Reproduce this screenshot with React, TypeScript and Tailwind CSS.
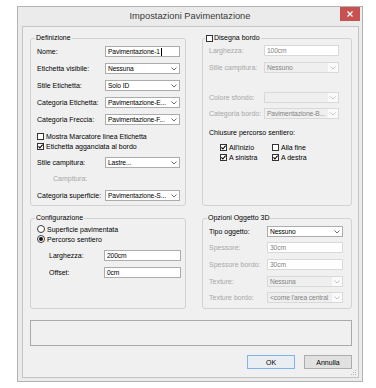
import React from "react";

const Chevron = ({ disabled }: { disabled?: boolean }) => (
  <svg width="6" height="4" viewBox="0 0 6 4" className="shrink-0">
    <path d="M0.5 0.5 L3 3 L5.5 0.5" fill="none" stroke={disabled ? "#c4c4c4" : "#6f6f6f"} strokeWidth="1" />
  </svg>
);

const Check = ({ checked }: { checked?: boolean }) => (
  <span className="flex h-[7px] w-[7px] shrink-0 items-center justify-center border border-[#333333] bg-white">
    {checked && (
      <svg width="5" height="5" viewBox="0 0 5 5">
        <path d="M0.4 2.4 L1.9 4 L4.6 0.6" fill="none" stroke="#000" strokeWidth="1.1" />
      </svg>
    )}
  </span>
);

const Radio = ({ checked }: { checked?: boolean }) => (
  <span className="flex h-[8px] w-[8px] shrink-0 items-center justify-center rounded-full border border-[#3a3a3a] bg-white">
    {checked && <span className="h-[4px] w-[4px] rounded-full bg-[#111111]" />}
  </span>
);

function Select({ value, disabled, className }: { value: string; disabled?: boolean; className: string }) {
  return (
    <div
      className={`flex h-[11px] shrink-0 items-center border ${
        disabled ? "border-[#d9d9d9] bg-[#efefef] text-[#838383]" : "border-[#acacac] bg-white text-black"
      } ${className}`}
    >
      <span className="min-w-0 flex-1 overflow-hidden whitespace-nowrap pl-[2px] text-[6.7px] leading-[9px] tracking-[-0.1px]">
        {value}
      </span>
      <span className={`flex h-full w-[10px] shrink-0 items-center justify-center ${disabled ? "bg-[#fafafa]" : ""}`}>
        <Chevron disabled={disabled} />
      </span>
    </div>
  );
}

function Input({ value, disabled, cursor, className }: { value: string; disabled?: boolean; cursor?: boolean; className: string }) {
  return (
    <div
      className={`flex h-[11px] shrink-0 items-center border bg-white pl-[2px] text-[6.7px] leading-[9px] tracking-[-0.1px] ${
        disabled ? "border-[#d9d9d9] text-[#838383]" : "border-[#acacac] text-black"
      } ${className}`}
    >
      <span className="whitespace-nowrap">{value}</span>
      {cursor && <span className="ml-[1px] h-[8px] w-[1px] bg-black" />}
    </div>
  );
}

function Row({
  label,
  labelW,
  disabledLabel,
  className,
  children,
}: {
  label: string;
  labelW: string;
  disabledLabel?: boolean;
  className: string;
  children: React.ReactNode;
}) {
  return (
    <div className={`flex h-[11px] items-center ${className}`}>
      <span className={`${labelW} shrink-0 whitespace-nowrap leading-[9px] ${disabledLabel ? "text-[#a7a7a7]" : "text-black"}`}>
        {label}
      </span>
      {children}
    </div>
  );
}

export default function App() {
  return (
    <div className="h-[388px] w-[376px] bg-white pl-[17px] pt-[6px] font-['Liberation_Sans',Arial,sans-serif] text-[7px] text-black">
      <div className="flex h-[376px] w-[346px] flex-col border border-[#b3b3b3] bg-[#ebebeb]">
        {/* title bar */}
        <div className="relative flex h-[19px] shrink-0 items-center justify-center">
          <span className="text-[9.3px] leading-[11px] text-[#3a3a3a]">Impostazioni Pavimentazione</span>
          <div className="absolute right-[2px] top-0 flex h-[14px] w-[20px] items-center justify-center bg-[#c75050]">
            <svg width="6" height="6" viewBox="0 0 6 6">
              <path d="M0.5 0.5 L5.5 5.5 M5.5 0.5 L0.5 5.5" stroke="#ffffff" strokeWidth="1.3" />
            </svg>
          </div>
        </div>
        {/* client */}
        <div className="relative mb-[3px] ml-[4px] mr-[3px] flex flex-1 flex-col border border-[#c4c4c4] bg-[#f0f0f0] pl-[7px] pr-[6px] pt-[7px]">
          <div className="flex gap-[16px]">
            {/* Definizione */}
            <fieldset className="h-[172px] w-[156px] shrink-0 rounded-[3px] border border-[#d2d2d2] p-0">
              <legend className="ml-[4px] px-[1px] leading-[8px]">Definizione</legend>
              <div className="flex flex-col pl-[6px] pr-[5px]">
                <Row label="Nome:" labelW="w-[68px]" className="mt-[4px]">
                  <Input value="Pavimentazione-1" cursor className="w-[75px]" />
                </Row>
                <Row label="Etichetta visibile:" labelW="w-[68px]" className="mt-[6px]">
                  <Select value="Nessuna" className="w-[75px]" />
                </Row>
                <Row label="Stile Etichetta:" labelW="w-[68px]" className="mt-[6px]">
                  <Select value="Solo ID" className="w-[75px]" />
                </Row>
                <Row label="Categoria Etichetta:" labelW="w-[68px]" className="mt-[6px]">
                  <Select value="Pavimentazione-E..." className="w-[75px]" />
                </Row>
                <Row label="Categoria Freccia:" labelW="w-[68px]" className="mt-[6px]">
                  <Select value="Pavimentazione-F..." className="w-[75px]" />
                </Row>
                <div className="mt-[6px] flex h-[10px] items-center gap-[2px]">
                  <Check />
                  <span className="leading-[9px]">Mostra Marcatore linea Etichetta</span>
                </div>
                <div className="flex h-[10px] items-center gap-[2px]">
                  <Check checked />
                  <span className="leading-[9px]">Etichetta agganciata al bordo</span>
                </div>
                <Row label="Stile campitura:" labelW="w-[68px]" className="mt-[6px]">
                  <Select value="Lastre..." className="w-[75px]" />
                </Row>
                <Row label="Campitura:" labelW="w-[68px]" disabledLabel className="mt-[5px] pl-[16px]">
                  <span />
                </Row>
                <Row label="Categoria superficie:" labelW="w-[68px]" className="mt-[6px]">
                  <Select value="Pavimentazione-S..." className="w-[75px]" />
                </Row>
              </div>
            </fieldset>

            {/* Disegna bordo */}
            <fieldset className="h-[172px] w-[150px] shrink-0 rounded-[3px] border border-[#d2d2d2] p-0">
              <legend className="ml-[2px] flex items-center gap-[1px] px-[1px] leading-[8px]">
                <Check />
                <span>Disegna bordo</span>
              </legend>
              <div className="flex flex-col pl-[6px] pr-[12px]">
                <Row label="Larghezza:" labelW="w-[55px]" disabledLabel className="mt-[3px]">
                  <Input value="100cm" disabled className="w-[75px]" />
                </Row>
                <Row label="Stile campitura:" labelW="w-[55px]" disabledLabel className="mt-[6px]">
                  <Select value="Nessuno" disabled className="w-[75px]" />
                </Row>
                <Row label="Colore sfondo:" labelW="w-[55px]" disabledLabel className="mt-[19px]">
                  <Select value="" disabled className="w-[75px]" />
                </Row>
                <Row label="Categoria bordo:" labelW="w-[55px]" disabledLabel className="mt-[5px]">
                  <Select value="Pavimentazione-B..." disabled className="w-[75px]" />
                </Row>
                <div className="mt-[8px] flex h-[10px] items-center leading-[9px]">Chiusure percorso sentiero:</div>
                <div className="mt-[5px] flex h-[10px] items-center pl-[11px]">
                  <div className="flex w-[52px] items-center gap-[2px]">
                    <Check checked />
                    <span className="leading-[9px]">All'inizio</span>
                  </div>
                  <div className="flex items-center gap-[2px]">
                    <Check />
                    <span className="leading-[9px]">Alla fine</span>
                  </div>
                </div>
                <div className="flex h-[10px] items-center pl-[11px]">
                  <div className="flex w-[52px] items-center gap-[2px]">
                    <Check checked />
                    <span className="leading-[9px]">A sinistra</span>
                  </div>
                  <div className="flex items-center gap-[2px]">
                    <Check checked />
                    <span className="leading-[9px]">A destra</span>
                  </div>
                </div>
              </div>
            </fieldset>
          </div>

          <div className="mt-[8px] flex gap-[16px]">
            {/* Configurazione */}
            <fieldset className="h-[95px] w-[156px] shrink-0 rounded-[3px] border border-[#d2d2d2] p-0">
              <legend className="ml-[4px] px-[1px] leading-[8px]">Configurazione</legend>
              <div className="flex flex-col pl-[6px] pr-[4px]">
                <div className="mt-[2px] flex h-[10px] items-center gap-[2px]">
                  <Radio />
                  <span className="leading-[9px]">Superficie pavimentata</span>
                </div>
                <div className="flex h-[10px] items-center gap-[2px]">
                  <Radio checked />
                  <span className="leading-[9px]">Percorso sentiero</span>
                </div>
                <Row label="Larghezza:" labelW="w-[55px]" className="mt-[6px] pl-[12px]">
                  <Input value="200cm" className="w-[77px]" />
                </Row>
                <Row label="Offset:" labelW="w-[55px]" className="mt-[6px] pl-[12px]">
                  <Input value="0cm" className="w-[77px]" />
                </Row>
              </div>
            </fieldset>

            {/* Opzioni Oggetto 3D */}
            <fieldset className="h-[95px] w-[150px] shrink-0 rounded-[3px] border border-[#d2d2d2] p-0">
              <legend className="ml-[4px] px-[1px] leading-[8px]">Opzioni Oggetto 3D</legend>
              <div className="flex flex-col pl-[6px] pr-[8px]">
                <Row label="Tipo oggetto:" labelW="w-[58px]" className="mt-[4px]">
                  <Select value="Nessuno" className="w-[76px]" />
                </Row>
                <Row label="Spessore:" labelW="w-[58px]" disabledLabel className="mt-[5px]">
                  <Input value="30cm" disabled className="w-[76px]" />
                </Row>
                <Row label="Spessore bordo:" labelW="w-[58px]" disabledLabel className="mt-[6px]">
                  <Input value="30cm" disabled className="w-[76px]" />
                </Row>
                <Row label="Texture:" labelW="w-[58px]" disabledLabel className="mt-[6px]">
                  <Select value="Nessuna" disabled className="w-[76px]" />
                </Row>
                <Row label="Texture bordo:" labelW="w-[58px]" disabledLabel className="mt-[5px]">
                  <Select value="<come l'area central" disabled className="w-[76px]" />
                </Row>
              </div>
            </fieldset>
          </div>

          {/* status box */}
          <div className="mt-[11px] h-[26px] w-[322px] border border-[#a9a9a9] bg-[#f0f0f0]" />

          {/* buttons */}
          <div className="mt-[9px] flex w-[322px] justify-end gap-[9px]">
            <button className="flex h-[14px] w-[48px] items-center justify-center border border-[#7eb4ea] bg-[#e9eef3] leading-[9px] text-black">
              OK
            </button>
            <button className="flex h-[14px] w-[48px] items-center justify-center border border-[#adadad] bg-[#e1e1e1] leading-[9px] text-black">
              Annulla
            </button>
          </div>

          {/* resize grip */}
          <svg className="absolute bottom-[1px] right-[1px]" width="6" height="6" viewBox="0 0 6 6">
            <rect x="4" y="0" width="1" height="1" fill="#b8b8b8" />
            <rect x="2" y="2" width="1" height="1" fill="#b8b8b8" />
            <rect x="4" y="2" width="1" height="1" fill="#b8b8b8" />
            <rect x="0" y="4" width="1" height="1" fill="#b8b8b8" />
            <rect x="2" y="4" width="1" height="1" fill="#b8b8b8" />
            <rect x="4" y="4" width="1" height="1" fill="#b8b8b8" />
          </svg>
        </div>
      </div>
    </div>
  );
}
